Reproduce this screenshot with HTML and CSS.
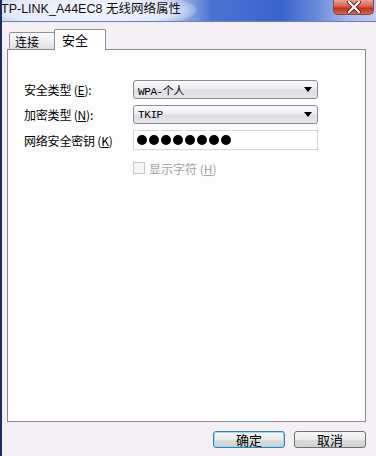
FILE: index.html
```html
<!DOCTYPE html>
<html>
<head>
<meta charset="utf-8">
<link rel="stylesheet" href="styles.css">
</head>
<body>
<div class="window">
  <div class="titlebar">
    <div class="glow"></div>
    <span class="title">TP-LINK_A44EC8 无线网络属性</span>
    <div class="close">
      <svg width="16" height="12" viewBox="0 0 16 12"><path d="M3 1 L13 11 M13 1 L3 11" stroke="#6a2020" stroke-width="4" stroke-linecap="round"/><path d="M3 1 L13 11 M13 1 L3 11" stroke="#ffffff" stroke-width="2.2" stroke-linecap="round"/></svg>
    </div>
  </div>
  <div class="body">
    <div class="tabs">
      <div class="tab">连接</div>
      <div class="tab active">安全</div>
    </div>
    <div class="panel">
      <div class="form">
        <label class="lbl">安全类型 (<u>E</u>):</label>
        <div class="select"><span class="val">WPA-个人</span><span class="arrow"></span></div>
        <label class="lbl">加密类型 (<u>N</u>):</label>
        <div class="select"><span class="val">TKIP</span><span class="arrow"></span></div>
        <label class="lbl">网络安全密钥 (<u>K</u>)</label>
        <div class="pwd">
          <i></i><i></i><i></i><i></i><i></i><i></i><i></i><i></i>
        </div>
        <span></span>
        <div class="check"><span class="box"></span><span class="ctext">显示字符 (<u>H</u>)</span></div>
      </div>
    </div>
    <div class="buttons">
      <div class="btn default">确定</div>
      <div class="btn">取消</div>
    </div>
  </div>
</div>
</body>
</html>
```
FILE: styles.css
```css
* { box-sizing: border-box; }
html, body { margin: 0; padding: 0; }
body {
  width: 376px;
  height: 456px;
  overflow: hidden;
  font-family: "Noto Sans CJK SC", "Liberation Sans", sans-serif;
  font-size: 12px;
  color: #000;
}
.window {
  width: 376px;
  height: 456px;
  display: flex;
  flex-direction: column;
  background: #f4eff5;
  border-left: 2px solid #1e2b5e;
}
.titlebar {
  position: relative;
  height: 22px;
  flex: none;
  display: flex;
  align-items: flex-start;
  justify-content: space-between;
  background: linear-gradient(90deg, #b9c9ea 0, #c3d1ee 120px, #8ea6e0 185px, #4a72d3 210px, #3a64cd 280px, #6a8ada 315px, #a8b6e8 345px, #c2cbee 376px);
  border-bottom: 1px solid #6f7fb6;
  overflow: hidden;
}
.glow {
  position: absolute;
  left: -20px;
  top: -10px;
  width: 215px;
  height: 40px;
  border-radius: 50%;
  background: radial-gradient(ellipse at center, rgba(245,248,255,0.95) 0, rgba(235,240,252,0.85) 55%, rgba(220,230,250,0) 75%);
}
.title {
  position: relative;
  font-family: "Liberation Sans", "Noto Sans CJK SC", sans-serif;
  font-size: 12.5px;
  line-height: 18px;
  margin-left: -1px;
  color: #111;
}
.close {
  position: relative;
  margin-right: 2px;
  width: 41px;
  height: 15px;
  border: 1px solid #7b4a52;
  border-top: none;
  border-radius: 0 0 5px 5px;
  background: linear-gradient(180deg, #eba092 0, #dc6a5a 40%, #c2321f 60%, #d9664a 100%);
  display: flex;
  align-items: center;
  justify-content: center;
}
.body {
  flex: 1;
  padding: 7px 8px 0 5px;
  display: flex;
  flex-direction: column;
}
.tabs {
  height: 20px;
  display: flex;
  align-items: flex-end;
  padding-left: 2px;
  position: relative;
  z-index: 2;
}
.tab {
  width: 46px;
  height: 17px;
  border: 1px solid #8c8e98;
  border-bottom: none;
  border-radius: 2px 2px 0 0;
  background: linear-gradient(180deg, #fbfbfc 0, #ececf0 60%, #dedde3 100%);
  padding-left: 5px;
  line-height: 17px;
}
.tab.active {
  width: 52px;
  height: 21px;
  margin-bottom: -1px;
  margin-left: -1px;
  background: #fdfdfd;
  padding-left: 7px;
  line-height: 20px;
  font-size: 13px;
}
.panel {
  height: 373px;
  width: 359px;
  border: 1px solid #898c95;
  background: #fdfdfd;
  padding: 30px 0 0 16px;
}
.form {
  display: grid;
  grid-template-columns: 109px 185px;
  grid-template-rows: 19px 19px 20px 13px;
  row-gap: 6px;
  align-items: center;
}
.lbl { line-height: 19px; letter-spacing: -0.2px; }
u { text-decoration: underline; text-underline-offset: 1px; }
.select {
  height: 19px;
  border: 1px solid #8a8a92;
  border-radius: 3px;
  background: linear-gradient(180deg, #fbfbfc 0, #eeedf1 45%, #dfdde3 55%, #e8e6ec 100%);
  display: flex;
  align-items: center;
  justify-content: space-between;
  padding: 0 5px 0 4px;
}
.val {
  font-family: "Liberation Mono", "Noto Sans CJK SC", monospace;
  font-size: 11px;
  letter-spacing: -0.4px;
}
.arrow {
  width: 0;
  height: 0;
  border-left: 4px solid transparent;
  border-right: 4px solid transparent;
  border-top: 5px solid #000;
}
.pwd {
  height: 20px;
  border: 1px solid #d4d4d8;
  background: #fff;
  display: flex;
  align-items: center;
  gap: 2px;
  padding-left: 3px;
}
.pwd i {
  width: 10px;
  height: 10px;
  border-radius: 50%;
  background: #000;
}
.check {
  display: flex;
  align-items: center;
  gap: 4px;
  margin-top: 11px;
  color: #a3a3a3;
}
.box {
  width: 12px;
  height: 12px;
  border: 1px solid #c8c8c8;
  background: #f4f4f4;
}
.ctext { line-height: 13px; }
.buttons {
  margin-top: 9px;
  display: flex;
  justify-content: flex-end;
  gap: 9px;
  width: 359px;
}
.btn {
  width: 72px;
  height: 17px;
  border: 1px solid #707070;
  border-radius: 3px;
  background: linear-gradient(180deg, #f6f6f6 0, #eaeaea 50%, #dcdcdc 51%, #d2d2d2 100%);
  text-align: center;
  line-height: 15px;
  font-size: 13px;
}
.btn.default {
  border-color: #3c7fb1;
  box-shadow: inset 0 0 0 1px #9fd8f4;
}
```
